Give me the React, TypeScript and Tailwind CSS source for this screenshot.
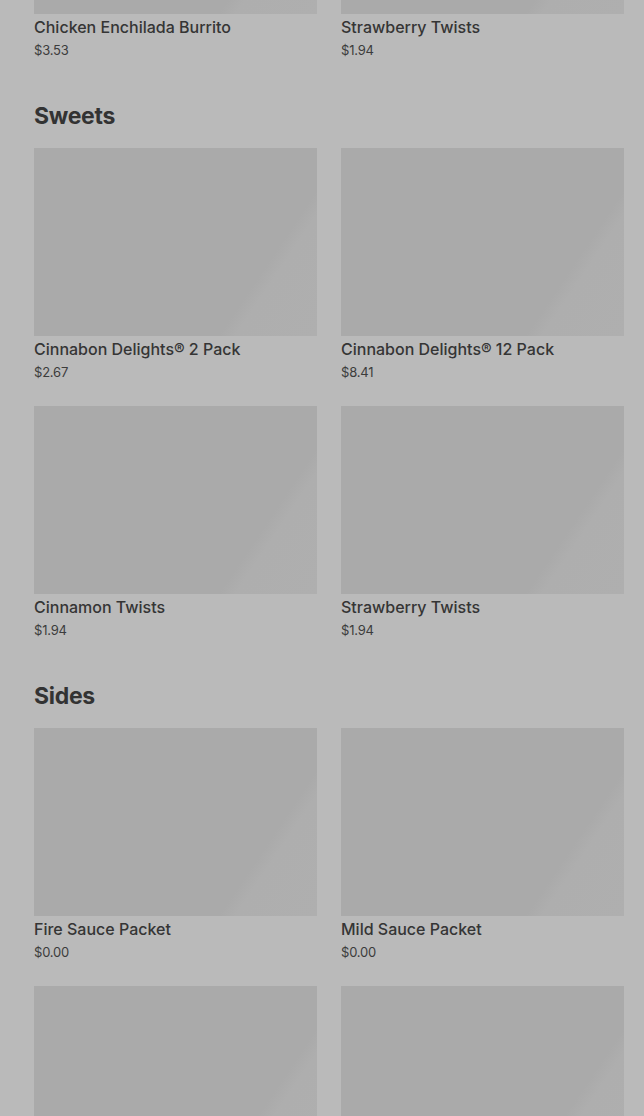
type Item = { name?: string; price?: string };

const topRow: Item[] = [
  { name: "Chicken Enchilada Burrito", price: "$3.53" },
  { name: "Strawberry Twists", price: "$1.94" },
];

const sections: { title: string; items: Item[] }[] = [
  {
    title: "Sweets",
    items: [
      { name: "Cinnabon Delights® 2 Pack", price: "$2.67" },
      { name: "Cinnabon Delights® 12 Pack", price: "$8.41" },
      { name: "Cinnamon Twists", price: "$1.94" },
      { name: "Strawberry Twists", price: "$1.94" },
    ],
  },
  {
    title: "Sides",
    items: [
      { name: "Fire Sauce Packet", price: "$0.00" },
      { name: "Mild Sauce Packet", price: "$0.00" },
      {},
      {},
    ],
  },
];

function Card({ item }: { item: Item }) {
  return (
    <div className="flex flex-col">
      <div className="h-[188px] bg-[linear-gradient(124deg,#aaaaaa_0%,#aaaaaa_76%,#aeaeae_80%,#afafaf_100%)]" />
      {item.name && (
        <>
          <div className="text-[16px] leading-[26px] font-medium text-[#353535]">
            {item.name}
          </div>
          <div className="text-[13px] leading-[20px] text-[#3c3c3c] tracking-[-0.2px]">
            {item.price}
          </div>
        </>
      )}
    </div>
  );
}

export default function App() {
  return (
    <div
      className="h-[1116px] overflow-hidden bg-[#bababa] pl-[34px] pr-[20px]"
      style={{ fontFamily: "Inter, 'Noto Sans', sans-serif" }}
    >
      <div className="mt-[-174px] flex flex-col gap-10">
        <div className="grid grid-cols-2 gap-x-6 gap-y-6">
          {topRow.map((it, i) => (
            <Card key={i} item={it} />
          ))}
        </div>
        {sections.map((s) => (
          <div key={s.title} className="flex flex-col">
            <h2 className="h-8 mb-4 text-[23px] leading-8 font-bold text-[#333333] tracking-[-0.3px]">
              {s.title}
            </h2>
            <div className="grid grid-cols-2 gap-x-6 gap-y-6">
              {s.items.map((it, i) => (
                <Card key={i} item={it} />
              ))}
            </div>
          </div>
        ))}
      </div>
    </div>
  );
}
